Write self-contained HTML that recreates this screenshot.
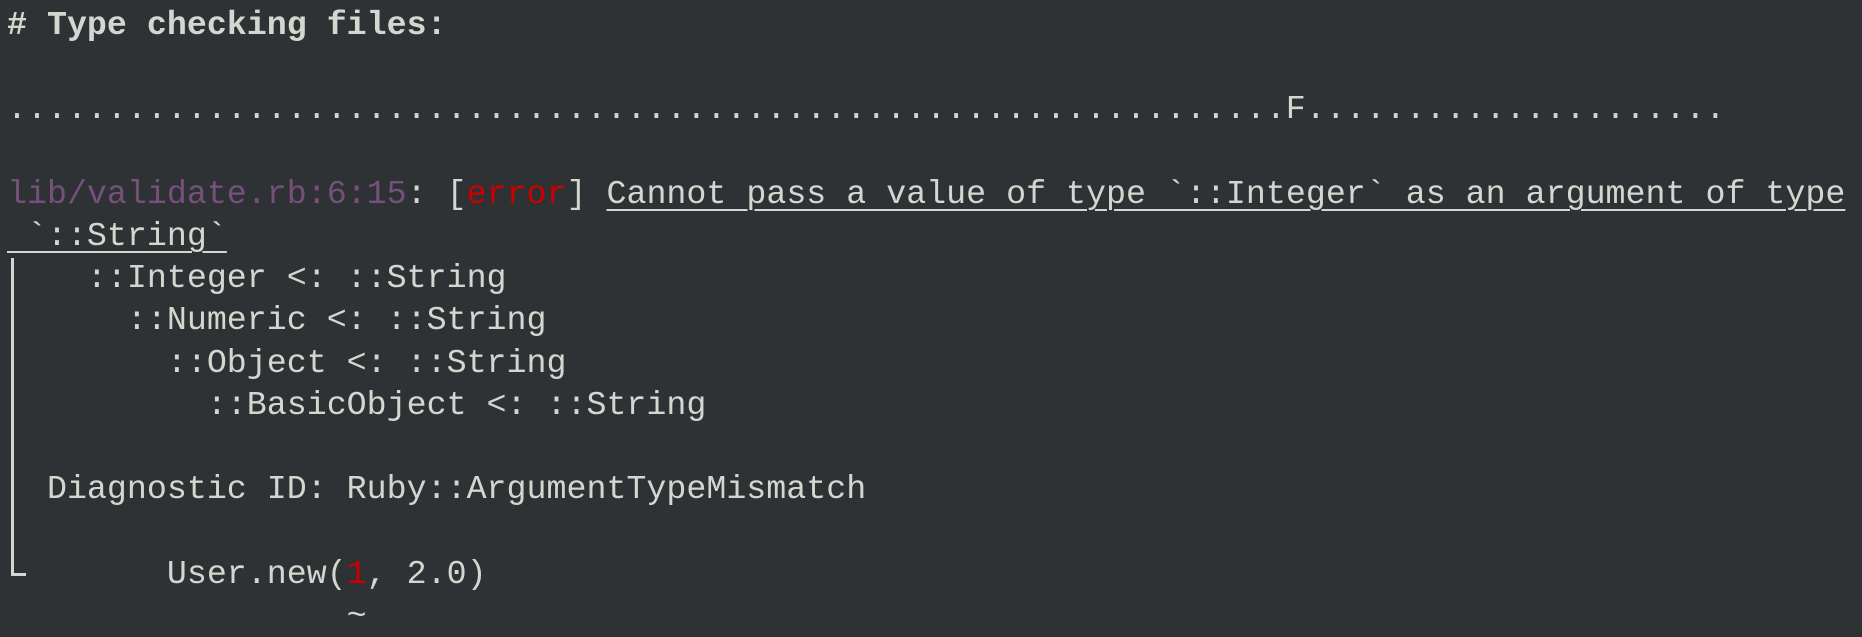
<!DOCTYPE html>
<html><head><meta charset="utf-8"><style>
html,body{margin:0;padding:0;background:#2e3235;width:1862px;height:634px;overflow:hidden}
pre{position:absolute;left:7px;top:4px;margin:0;font-family:"Liberation Mono","DejaVu Sans Mono",monospace;font-size:33.3px;line-height:42.2px;color:#d3d7cf;white-space:pre}
.b{font-weight:bold}
.p{color:#75507b}
.r{color:#cc0000}
.u{text-decoration:underline;text-underline-offset:6px;text-decoration-thickness:2px}
.bar{position:absolute;background:#d3d7cf}
</style></head><body>
<pre><span class="b"># Type checking files:</span>

................................................................F.....................

<span class="p">lib/validate.rb:6:15</span>: [<span class="r">error</span>] <span class="u">Cannot pass a value of type `::Integer` as an argument of type</span>
<span class="u"> `::String`</span>
    ::Integer &lt;: ::String
      ::Numeric &lt;: ::String
        ::Object &lt;: ::String
          ::BasicObject &lt;: ::String

  Diagnostic ID: Ruby::ArgumentTypeMismatch

        User.new(<span class="r">1</span>, 2.0)
                 ~</pre>
<div class="bar" style="left:11px;top:258px;width:3px;height:318px"></div>
<div class="bar" style="left:11px;top:573px;width:15px;height:3px"></div>
</body></html>
